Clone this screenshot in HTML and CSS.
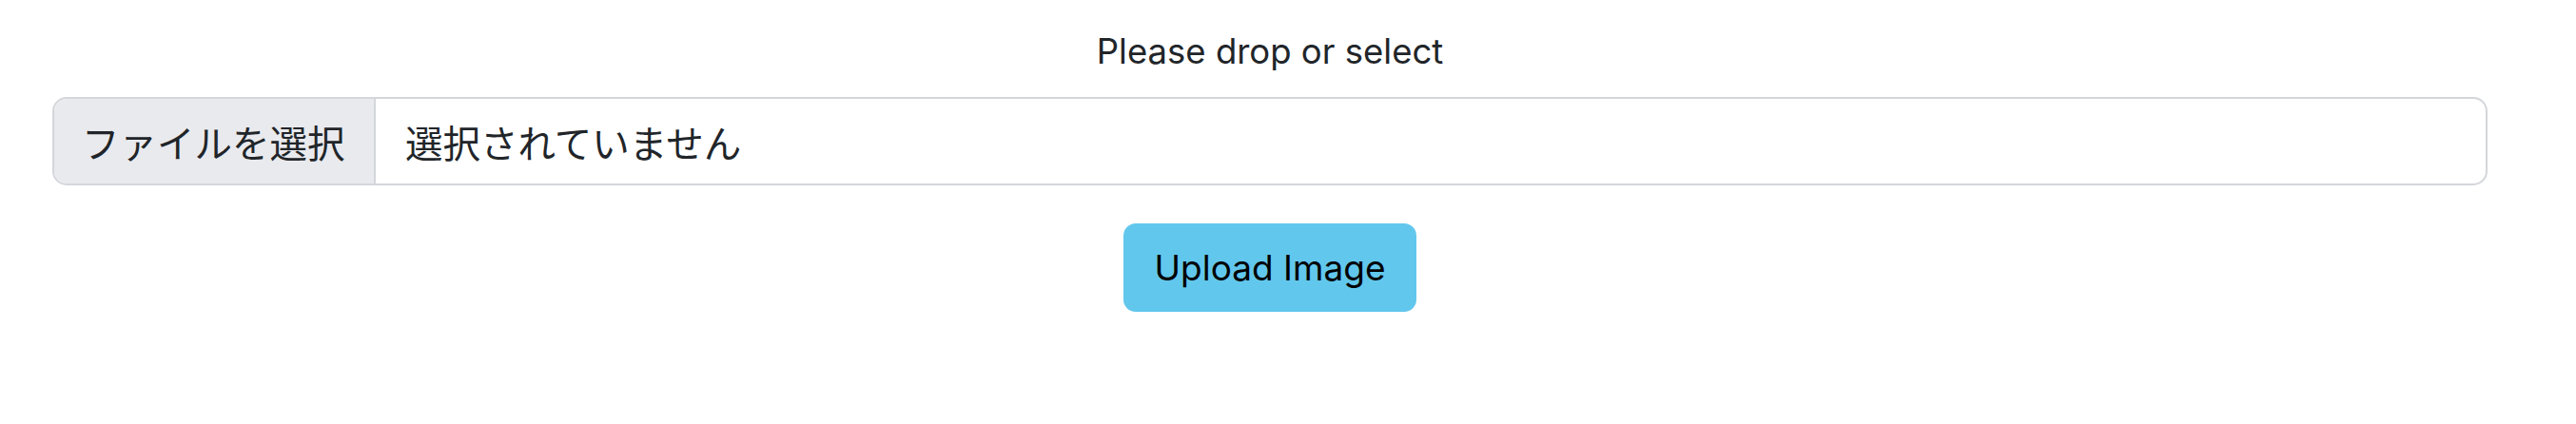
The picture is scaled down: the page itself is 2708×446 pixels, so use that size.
FILE: index.html
```html
<!DOCTYPE html>
<html lang="ja">
<head>
<meta charset="utf-8">
<title>Upload</title>
<link rel="stylesheet" href="styles.css">
</head>
<body>
<div class="page">
  <div class="title">Please drop or select</div>
  <label class="file-group">
    <span class="file-btn">ファイルを選択</span>
    <span class="file-name">選択されていません</span>
  </label>
  <div class="actions">
    <button class="upload" type="button">Upload Image</button>
  </div>
</div>
</body>
</html>
```
FILE: styles.css
```css
html, body {
  margin: 0;
  padding: 0;
  background: #ffffff;
}
.page {
  width: 2670px;
  box-sizing: border-box;
  padding: 29px 55px 0;
  font-family: Inter, "Noto Sans CJK JP", sans-serif;
  color: #212529;
  font-size: 36.5px;
}
.title {
  text-align: center;
  line-height: 50px;
  height: 50px;
}
.file-group {
  margin-top: 23px;
  display: flex;
  height: 93px;
  box-sizing: border-box;
  border: 2px solid #d3d6da;
  border-radius: 15px;
  overflow: hidden;
  font-family: "Noto Sans CJK JP", sans-serif;
  font-size: 39.5px;
}
.file-btn {
  display: flex;
  align-items: center;
  width: 338px;
  box-sizing: border-box;
  padding-left: 29px;
  background: #e9eaee;
  border-right: 2px solid #d3d6da;
  white-space: nowrap;
}
.file-name {
  display: flex;
  align-items: center;
  padding-left: 31px;
  flex: 1;
}
.actions {
  display: flex;
  justify-content: center;
  margin-top: 40px;
}
.upload {
  width: 308px;
  height: 93px;
  border: none;
  border-radius: 13px;
  background: #62c7ed;
  color: #000000;
  font-family: Inter, sans-serif;
  font-size: 37px;
  padding: 0;
}
```
